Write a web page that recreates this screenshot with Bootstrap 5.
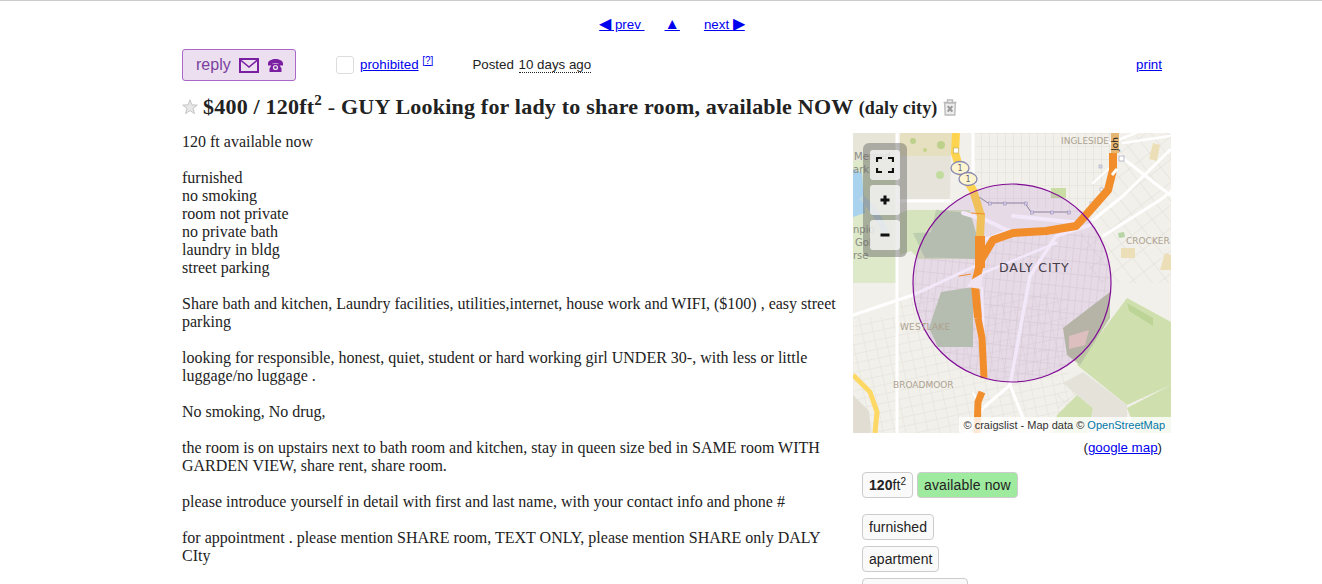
<!DOCTYPE html>
<html lang="en">
<head>
<meta charset="utf-8">
<title>$400 / 120ft2 - GUY Looking for lady to share room</title>
<link href="https://cdn.jsdelivr.net/npm/bootstrap@5.3.0/dist/css/bootstrap.min.css" rel="stylesheet">
<style>
body{background:#fff;color:#222;font-family:"Liberation Serif",serif;font-size:16px;line-height:18px;border-top:1px solid #ccc}
a{color:#00e}
.cl-page{width:989px;margin-left:182px}
.cl-sans{font-family:"Liberation Sans",Arial,sans-serif;font-size:13.33px;line-height:18px}
.cl-nav{padding:15px 9px 0 0;height:48px}
.cl-nav a{white-space:pre}
.cl-arrow{font-size:15.5px;line-height:0}
.cl-gap-up{margin-left:20px}
.cl-tools{height:32px;padding-right:9px}
.cl-reply{width:114px;height:32px;border:1px solid #a968c8;border-radius:3px;background:#ecdff0;color:#7a3f9d;font-size:16px;padding-left:13px;gap:8px}
.cl-icons{gap:9px}
.cl-check{width:18px;height:18px;border:1px solid #ddd;border-radius:3px;background:#fff;margin:0 6px 0 40px}
.cl-sup{font-size:10px;line-height:0;top:-.55em}
.cl-time{border-bottom:1px dotted #222;display:inline-block;line-height:14px;margin-left:1px}
.cl-posted{margin-left:39px}
.cl-title{font-size:22px;line-height:26px;font-weight:700;margin:13px 0;height:26px;white-space:nowrap;font-family:"Liberation Serif",serif;color:#222;letter-spacing:.21px}
.cl-title sup{font-size:15px;top:-.55em;line-height:0;position:relative;vertical-align:baseline}
.cl-title small{font-size:18px;font-weight:700;letter-spacing:.1px}
.cl-star{margin-right:5px}
.cl-bin{margin-left:6px}
.cl-text{width:671px;padding-right:8px}
.cl-side{width:318px}
.cl-map{width:318px;height:300px;overflow:hidden}
.cl-map svg{display:block}
.cl-ctrl{left:10px;top:10px;background:rgba(100,100,100,.45);border-radius:6px;padding:7px;gap:5px}
.cl-btn{width:30px;height:30px;background:rgba(255,255,255,.75);border-radius:3px}
.cl-attr{right:0;bottom:0;padding:0 6px 0 5px;height:16px;font-size:11px;line-height:16px;background:rgba(255,255,255,.8);font-family:"Liberation Sans",Arial,sans-serif;color:#333;white-space:nowrap}
.cl-attr a{color:#0078a8;text-decoration:none}
.cl-gmap{padding:6px 9px 0 0;text-align:right;height:32px}
.cl-chips{padding-left:9px;gap:4px;margin-top:7px}
.cl-chip{height:26px;border:1px solid #ccc;border-radius:4px;background:#fafafa;padding:0 6px;line-height:24px;white-space:nowrap;font-size:14px;letter-spacing:.05px}
.cl-chip sup{font-size:10px;top:-.5em}
.cl-chip.cl-avail{background:#9eea9e;letter-spacing:.15px}
.cl-stack{padding-left:9px;gap:6px;margin-top:16px}
.cl-maplbl{font-family:"DejaVu Sans",sans-serif;font-size:9px;fill:#aca28f}
.cl-maplbl-dim{font-family:"DejaVu Sans",sans-serif;font-size:10px;fill:#8c8c84}
</style>
</head>
<body>
<div class="cl-page">
  <nav class="cl-nav cl-sans d-flex justify-content-center">
    <a href="#"><span class="cl-arrow">◀</span> prev </a><a href="#" class="cl-gap-up"><span class="cl-arrow">▲</span></a><a href="#" class="ms-4">next <span class="cl-arrow">▶</span></a>
  </nav>
  <div class="cl-tools cl-sans d-flex align-items-center">
    <div class="cl-reply d-flex align-items-center">
      <span>reply</span>
      <span class="cl-icons d-flex align-items-center">
        <svg width="20" height="15" viewBox="0 0 20 15"><rect x="1" y="1" width="18" height="13" fill="none" stroke="#7a1fa2" stroke-width="2"/><path d="M1.500 2 10 9l8.500-7" fill="none" stroke="#7a1fa2" stroke-width="1.600"/></svg>
        <svg width="15" height="13" viewBox="0 0 15 13"><path fill="#7a1fa2" d="M0 4.500C0 1.500 4 0 7.500 0S15 1.500 15 4.500V6.500H10.500V4.500C9 3.800 6 3.800 4.500 4.500V6.500H0zM3 7C4 5.800 5 4.800 5.500 4.800H9.500C10 4.800 11 5.800 12 7L13.500 9.500V13H1.500V9.500z"/><circle cx="7.500" cy="8.500" r="2.600" fill="#ecdff0"/><circle cx="7.500" cy="8.500" r="1.300" fill="#7a1fa2"/></svg>
      </span>
    </div>
    <span class="cl-check"></span>
    <span><a href="#">prohibited</a> <sup class="cl-sup"><a href="#">[?]</a></sup></span>
    <span class="cl-posted">Posted <span class="cl-time">10 days ago</span></span>
    <a href="#" class="ms-auto">print</a>
  </div>
  <h1 class="cl-title d-flex align-items-center">
    <svg width="16" height="16" viewBox="0 0 16 16" class="cl-star flex-shrink-0"><path d="M8 .8l1.900 5.100 5.400.2-4.300 3.300 1.500 5.200L8 11.600l-4.500 3 1.500-5.200L.7 6.100l5.400-.2z" fill="#e8e8e8" stroke="#c4c4c4"/></svg>
    <span>$400 / 120ft<sup>2</sup> <span class="fw-normal">-</span> GUY Looking for lady to share room, available NOW <small>(daly city)</small></span>
    <svg width="14" height="17" viewBox="0 0 14 17" class="cl-bin flex-shrink-0"><path d="M.5 3.500h13M4.500 3V1h5v2" fill="none" stroke="#bbb" stroke-width="1.400"/><path d="M1.700 4h10.600l-.5 12H2.200z" fill="#eee" stroke="#bbb" stroke-width="1.400"/><path d="M4.700 7.200l4.600 5.400M9.300 7.200l-4.600 5.400" stroke="#999" stroke-width="2"/></svg>
  </h1>
  <div class="d-flex align-items-start">
    <section class="cl-text">
      120 ft available now<br><br>
      furnished<br>no smoking<br>room not private<br>no private bath<br>laundry in bldg<br>street parking<br><br>
      Share bath and kitchen, Laundry facilities, utilities,internet, house work and WIFI, ($100) , easy street parking<br><br>
      looking for responsible, honest, quiet, student or hard working girl UNDER 30-, with less or little luggage/no luggage .<br><br>
      No smoking, No drug,<br><br>
      the room is on upstairs next to bath room and kitchen, stay in queen size bed in SAME room WITH GARDEN VIEW, share rent, share room.<br><br>
      please introduce yourself in detail with first and last name, with your contact info and phone #<br><br>
      for appointment . please mention SHARE room, TEXT ONLY, please mention SHARE only DALY CIty
    </section>
    <aside class="cl-side flex-shrink-0">
      <div class="cl-map position-relative">
        <svg width="318" height="300" viewBox="0 0 318 300">
          <defs>
            <pattern id="g1" width="8" height="13" patternUnits="userSpaceOnUse"><path d="M0 0H8M0 0V13" stroke="#e0ddd5" stroke-width="1" fill="none"/></pattern>
            <pattern id="g2" width="11" height="9" patternUnits="userSpaceOnUse" patternTransform="rotate(-12)"><path d="M0 0H11M0 0V9" stroke="#e2dfd7" stroke-width="1" fill="none"/></pattern>
            <pattern id="g3" width="7" height="13" patternUnits="userSpaceOnUse" patternTransform="rotate(6)"><path d="M0 0H7M0 0V13" stroke="#ddd9d1" stroke-width="1" fill="none"/></pattern>
            <pattern id="g4" width="13" height="18" patternUnits="userSpaceOnUse" patternTransform="rotate(-38)"><path d="M0 0H13M0 0V18" stroke="#e0ddd5" stroke-width="1" fill="none"/></pattern>
            <clipPath id="inC"><circle cx="159" cy="150" r="99"/></clipPath>
          </defs>
          <rect width="318" height="300" fill="#f2f0eb"/>
          <path d="M122 0H262V50L235 80 122 70z" fill="url(#g1)"/>
          <path d="M225 90 262 50 268 0H318V150H240z" fill="url(#g4)"/>
          <rect x="46" y="160" width="170" height="140" fill="url(#g2)"/>
          <rect y="184" width="46" height="116" fill="url(#g2)"/>
          <rect x="60" y="100" width="200" height="150" fill="url(#g3)" clip-path="url(#inC)"/>
          <rect x="204" y="250" width="114" height="50" fill="url(#g4)"/>
          <!-- parks and water -->
          <path d="M0 0H44V150H0z" fill="#dde9c9"/>
          <path d="M0 0H44V25L0 28z" fill="#e6e5d8"/>
          <path d="M0 36 9 40 12 80 0 84z" fill="#a9d2ee"/>
          <path d="M10 62C22 72 30 84 36 100L30 102C24 88 16 76 6 66z" fill="#c0d8e4"/>
          <path d="M47 0H100L98 23H47z" fill="#e6e0c0"/>
          <path d="M47 23H98L97 66H47z" fill="#e6e3db"/>
          <circle cx="60" cy="8" r="3" fill="#bdd08c"/><circle cx="88" cy="12" r="4" fill="#bdd08c"/><circle cx="87" cy="42" r="4" fill="#c2dca0"/><circle cx="72" cy="17" r="2" fill="#c4d48c"/>
          <path d="M47 80 55 77H117L123 100 122 126H66L58 118 47 122z" fill="#d6e4bd"/>
          <path d="M72 124 83 77 117 80 123 100 122 126z" fill="#bccfae"/>
          <path d="M60 100 118 98 122 123 72 125z" fill="#bccfae"/>
          <path d="M88 159 120 154 120 214H85L76 195z" fill="#bccfae"/>
          <path d="M224 232 274 165 318 189V252L274 272z" fill="#cfe0ae"/>
          <path d="M210 195 257 159V185L227 232 214 222z" fill="#bcc6a4"/>
          <path d="M216 203 236 197 232 212 216 216z" fill="#e9d2c0"/>
          <path d="M204 282 224 262 240 275 237 300H200z" fill="#cfe0ae"/>
          <path d="M274 275 318 252V300H284z" fill="#cfe0ae"/>
          <path d="M210 250 230 239 274 272V290L235 300 240 275 224 262z" fill="#e5e2da"/>
          <path d="M274 170 300 185 300 193 276 178z" fill="#bcd596"/>
          <path d="M198 55H213V65H198z" fill="#c9dda5"/>
          <path d="M265 100l6-1 1 5-6 1z" fill="#b6d4a4"/>
          <path d="M268 115H282V125H268z" fill="#ecdfb8"/>
          <path d="M312 120 318 122V137H307z" fill="#ecdfb8"/>
          <path d="M300 10 307 12 304 28 296 26z" fill="#ecdfb8"/>
          <path d="M0 262 16 278 18 300H0z" fill="#e2ddd3"/>
          <!-- main roads -->
          <g fill="none" stroke="#fff" stroke-linecap="round">
            <path d="M44 0V300" stroke-width="3"/>
            <path d="M120 0V56" stroke-width="3"/>
            <path d="M44 68H97" stroke-width="3"/>
            <path d="M0 182 60 162 122 133" stroke-width="3"/>
            <path d="M110 80 133 87 160 100" stroke-width="4"/>
            <path d="M130 107 157 97" stroke-width="3"/>
            <path d="M160 83 180 85 227 90" stroke-width="4"/>
            <path d="M237 92 203 103 177 143 157 252" stroke-width="3.500"/>
            <path d="M130 140 203 110" stroke-width="2.500"/>
            <path d="M157 252 130 275 114 299M157 252 170 285 175 299" stroke-width="3"/>
            <path d="M250 103 307 67 320 57" stroke-width="3"/>
            <path d="M240 87 270 63 317 17" stroke-width="3"/>
            <path d="M267 23 317 62" stroke-width="3"/>
            <path d="M257 10 283 0M270 10 317 3" stroke-width="2.500"/>
            <path d="M262 30 240 50" stroke-width="2"/>
            <path d="M129 155 132 245" stroke-width="2.500"/>
            <path d="M120 260 128 272" stroke-width="2"/>
          </g>
          <path d="M120 60 135 70 H172L178 79H216" fill="none" stroke="#8d8d96" stroke-width="1"/>
          <g fill="#dcdcf0" stroke="#99a" stroke-width=".5"><rect x="135.500" y="69" width="3" height="3"/><rect x="150.500" y="69" width="3" height="3"/><rect x="171.500" y="69" width="3" height="3"/><rect x="177.500" y="78" width="3" height="3"/><rect x="197.500" y="78" width="3" height="3"/><rect x="214.500" y="78" width="3" height="3"/><rect x="246" y="32" width="3" height="3"/><rect x="237" y="69" width="3" height="3" fill="#fff"/><rect x="247" y="55" width="3" height="3" fill="#fff"/></g>
          <!-- freeway -->
          <path d="M103 0 102 20 107 37 120 57 128 83 127 104" fill="none" stroke="#fdd34f" stroke-width="8"/>
          <path d="M0 242 17 259 24 279 22 300" fill="none" stroke="#fdd865" stroke-width="5"/>
          <rect x="100.500" y="15" width="5" height="5" fill="#fff" stroke="#b9a95c" stroke-width=".6"/>
          <rect width="318" height="300" fill="#8020c0" opacity=".1" clip-path="url(#inC)"/>
          <g fill="none" stroke="#f18d2b" stroke-linejoin="round">
            <path d="M260 20 260 37 255 57 233 82 223 93 193 98 160 100 140 107 128 127 123 147 122 152 125 185" stroke-width="8"/>
            <path d="M127 103V135" stroke-width="10"/>
            <path d="M125 185 129 205 131 245" stroke-width="7"/>
            <path d="M129 259 125 269 124 300" stroke-width="7"/>
          </g>
          <path d="M262 0V20" stroke="#e6b771" stroke-width="8"/>
          <path d="M259 42 264 36" stroke="#fff" stroke-width="3"/>
          <path d="M118 80 132 81M106 143 118 141" stroke="#f18d2b" stroke-width="1" fill="none"/>
          <path d="M118 147 130 140 128 156 114 154z" fill="#f1e4f2"/>
          <rect x="266" y="23" width="5" height="5" fill="#fff" stroke="#aab" stroke-width=".8"/>
          <g stroke="#8a8ab0" stroke-width="1.300"><ellipse cx="107" cy="35" rx="9" ry="6.500" fill="#fdf5d0"/><ellipse cx="115" cy="46" rx="9" ry="6.500" fill="#fdf5d0"/></g>
          <text x="107" y="38" class="cl-maplbl" text-anchor="middle" style="font-size:8px;fill:#667">1</text>
          <text x="115" y="49" class="cl-maplbl" text-anchor="middle" style="font-size:8px;fill:#667">1</text>
          <circle cx="159" cy="150" r="99" fill="none" stroke="#800d96" stroke-width="1.200"/>
          <text x="208" y="11" class="cl-maplbl">INGLESIDE</text>
          <text x="273" y="111" class="cl-maplbl">CROCKER</text>
          <text x="146" y="139" class="cl-maplbl" style="font-size:12.500px;fill:#443c48;letter-spacing:.9px">DALY CITY</text>
          <text x="47" y="197" class="cl-maplbl" style="letter-spacing:.2px">WESTLAKE</text>
          <text x="40" y="255" class="cl-maplbl">BROADMOOR</text>
          <text x="1" y="27" class="cl-maplbl-dim">Merced</text>
          <text x="0" y="40" class="cl-maplbl-dim">ark</text>
          <text x="0" y="100" class="cl-maplbl-dim">npio</text>
          <text x="2" y="113" class="cl-maplbl-dim">Gol</text>
          <text x="0" y="126" class="cl-maplbl-dim">rse</text>
          <text x="265" y="18" class="cl-maplbl" transform="rotate(-90 265 18)" style="fill:#222">Joh</text>
        </svg>
        <div class="cl-ctrl position-absolute d-flex flex-column">
          <div class="cl-btn d-flex align-items-center justify-content-center">
            <svg width="18" height="16" viewBox="0 0 18 16"><path d="M1 5V1H6M12 1H17V5M17 11V15H12M6 15H1V11" fill="none" stroke="#111" stroke-width="2.200"/></svg>
          </div>
          <div class="cl-btn d-flex align-items-center justify-content-center">
            <svg width="10" height="10" viewBox="0 0 10 10"><path d="M5 .5v9M.5 5h9" stroke="#111" stroke-width="3"/></svg>
          </div>
          <div class="cl-btn d-flex align-items-center justify-content-center">
            <svg width="10" height="4" viewBox="0 0 10 4"><path d="M.5 2h9" stroke="#111" stroke-width="3"/></svg>
          </div>
        </div>
        <div class="cl-attr position-absolute">© craigslist - Map data © <a href="#">OpenStreetMap</a></div>
      </div>
      <div class="cl-gmap cl-sans">(<a href="#">google map</a>)</div>
      <div class="cl-chips cl-sans d-flex">
        <span class="cl-chip"><b>120</b>ft<sup>2</sup></span>
        <span class="cl-chip cl-avail">available now</span>
      </div>
      <div class="cl-stack cl-sans d-flex flex-column align-items-start">
        <span class="cl-chip">furnished</span>
        <span class="cl-chip">apartment</span>
        <span class="cl-chip">laundry in bldg</span>
      </div>
    </aside>
  </div>
</div>
</body>
</html>
